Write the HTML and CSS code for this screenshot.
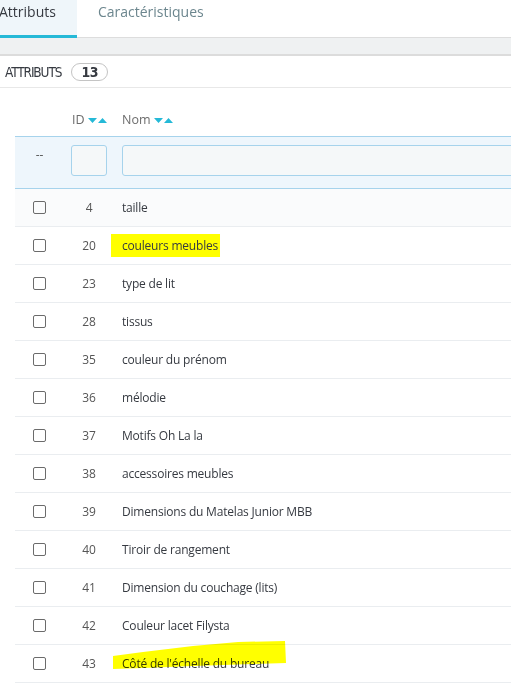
FILE: index.html
```html
<!DOCTYPE html>
<html lang="fr">
<head>
<meta charset="utf-8">
<title>Attributs</title>
<link rel="stylesheet" href="styles.css">
</head>
<body>
<nav class="tabs">
  <a class="tab active">Attributs</a>
  <a class="tab">Caractéristiques</a>
</nav>
<div class="toolbar"></div>
<div class="panel-heading">
  <span class="heading-title">ATTRIBUTS</span>
  <span class="badge">13</span>
</div>
<table class="grid">
  <colgroup>
    <col class="w-check">
    <col class="w-id">
    <col>
  </colgroup>
  <thead>
    <tr class="head">
      <th class="c-check"></th>
      <th class="c-id">ID<svg class="sort" width="19" height="5" viewBox="0 0 19 5"><path d="M0 0h9l-4.5 5z M10 5h9l-4.5-5z" fill="#25b9d7"/></svg></th>
      <th class="c-name">Nom<svg class="sort" width="19" height="5" viewBox="0 0 19 5"><path d="M0 0h9l-4.5 5z M10 5h9l-4.5-5z" fill="#25b9d7"/></svg></th>
    </tr>
    <tr class="filter">
      <th class="c-check dash">--</th>
      <th class="c-id"><span class="input"></span></th>
      <th class="c-name clip"><span class="input wide"></span></th>
    </tr>
  </thead>
  <tbody>
    <tr class="first"><td class="c-check"><span class="box"></span></td><td class="c-id">4</td><td class="c-name">taille</td></tr>
    <tr><td class="c-check"><span class="box"></span></td><td class="c-id">20</td><td class="c-name"><span class="mark">couleurs meubles</span></td></tr>
    <tr><td class="c-check"><span class="box"></span></td><td class="c-id">23</td><td class="c-name">type de lit</td></tr>
    <tr><td class="c-check"><span class="box"></span></td><td class="c-id">28</td><td class="c-name">tissus</td></tr>
    <tr><td class="c-check"><span class="box"></span></td><td class="c-id">35</td><td class="c-name">couleur du prénom</td></tr>
    <tr><td class="c-check"><span class="box"></span></td><td class="c-id">36</td><td class="c-name">mélodie</td></tr>
    <tr><td class="c-check"><span class="box"></span></td><td class="c-id">37</td><td class="c-name">Motifs Oh La la</td></tr>
    <tr><td class="c-check"><span class="box"></span></td><td class="c-id">38</td><td class="c-name">accessoires meubles</td></tr>
    <tr><td class="c-check"><span class="box"></span></td><td class="c-id">39</td><td class="c-name">Dimensions du Matelas Junior MBB</td></tr>
    <tr><td class="c-check"><span class="box"></span></td><td class="c-id">40</td><td class="c-name">Tiroir de rangement</td></tr>
    <tr><td class="c-check"><span class="box"></span></td><td class="c-id">41</td><td class="c-name">Dimension du couchage (lits)</td></tr>
    <tr><td class="c-check"><span class="box"></span></td><td class="c-id">42</td><td class="c-name">Couleur lacet Filysta</td></tr>
    <tr><td class="c-check"><span class="box"></span></td><td class="c-id">43</td><td class="c-name marked">Côté de l'échelle du bureau<svg class="scribble" width="180" height="32" viewBox="0 0 180 32"><path d="M0 15 L30 11 L80 5 L125 1 L172 0 L173 22 L140 23 L80 25 L30 27 L0 28 Z" fill="#ffff00"/></svg></td></tr>
  </tbody>
</table>
</body>
</html>
```
FILE: styles.css
```css
html, body {
  margin: 0;
  padding: 0;
  background: #ffffff;
  overflow: hidden;
}
body {
  width: 511px;
  height: 686px;
  font-family: "Open Sans", "Liberation Sans", sans-serif;
  color: #363a41;
}
.tabs {
  display: flex;
  margin-left: -22px;
  height: 38px;
  border-bottom: 1px solid #dddddd;
  box-sizing: border-box;
}
.tab {
  display: block;
  padding: 1px 21px 0;
  font-size: 14px;
  line-height: 22px;
  color: #6c868e;
  height: 38px;
  box-sizing: border-box;
}
.tab.active {
  color: #363a41;
  background: #eff6fa;
  border-bottom: 3px solid #25b9d7;
}
.toolbar {
  height: 16px;
  background: #eff1f2;
  border-bottom: 2px solid #dcdcdc;
}
.panel-heading {
  display: flex;
  align-items: center;
  height: 31px;
  padding-left: 5px;
  border-bottom: 1px solid #e8e8e8;
  font-family: "DejaVu Sans Condensed", "Liberation Sans Narrow", sans-serif;
  font-size: 13.5px;
}
.heading-title {
  color: #363a41;
  letter-spacing: -1.1px;
  padding-top: 1px;
}
.badge {
  margin-left: 10px;
  width: 35px;
  height: 16px;
  border: 1px solid #c4c4c4;
  border-radius: 9px;
  display: flex;
  align-items: center;
  justify-content: center;
  font-weight: bold;
  font-size: 14px;
  letter-spacing: -0.5px;
  color: #363a41;
}
.grid {
  margin-left: 15px;
  width: 496px;
  table-layout: fixed;
  border-collapse: collapse;
  font-size: 12px;
  letter-spacing: -0.2px;
}
.w-check {
  width: 49px;
}
.w-id {
  width: 50px;
}
.grid th, .grid td {
  padding: 0;
  text-align: left;
  font-weight: normal;
  white-space: nowrap;
}
.grid .c-check {
  text-align: center;
}
.grid .c-name {
  padding-left: 8px;
}
.grid .clip {
  overflow: hidden;
}
.head th {
  height: 48px;
  vertical-align: bottom;
  padding-bottom: 8px;
  color: #6c6c6c;
  font-size: 12.5px;
  letter-spacing: 0;
  box-sizing: border-box;
}
.grid .head .c-id {
  padding-left: 8px;
}
.sort {
  margin-left: 3px;
  vertical-align: 1px;
}
.filter th {
  background: #eef6fc;
  border-top: 1px solid #a6d3ec;
  border-bottom: 1px solid #a6d3ec;
  height: 52px;
  box-sizing: border-box;
  vertical-align: top;
  padding-top: 8px;
}
.grid .filter .dash {
  padding-top: 10px;
  line-height: 16px;
  color: #555555;
  letter-spacing: 0;
}
.grid .filter .c-id {
  padding-left: 7px;
}
.input {
  display: block;
  width: 34px;
  height: 29px;
  border: 1px solid #a6d3ec;
  border-radius: 3px;
  background: #f5f8f9;
}
.input.wide {
  width: 420px;
}
tbody td {
  height: 38px;
  box-sizing: border-box;
  border-bottom: 1px solid #eaedf0;
  vertical-align: middle;
  color: #363a41;
}
tbody tr.first td {
  background: #fafbfc;
}
.grid tbody .c-id {
  text-align: center;
  color: #555555;
}
.grid tbody .c-check {
  line-height: 0;
  vertical-align: top;
  padding-top: 12px;
}
.box {
  display: inline-block;
  width: 11px;
  height: 11px;
  border: 1px solid #6b6b6b;
  border-radius: 2px;
}
.mark {
  background: #ffff00;
  padding: 3px 2px 3px 11px;
  margin-left: -11px;
}
.marked {
  position: relative;
}
.scribble {
  position: absolute;
  left: -1px;
  top: -4px;
  mix-blend-mode: multiply;
  pointer-events: none;
}
```
